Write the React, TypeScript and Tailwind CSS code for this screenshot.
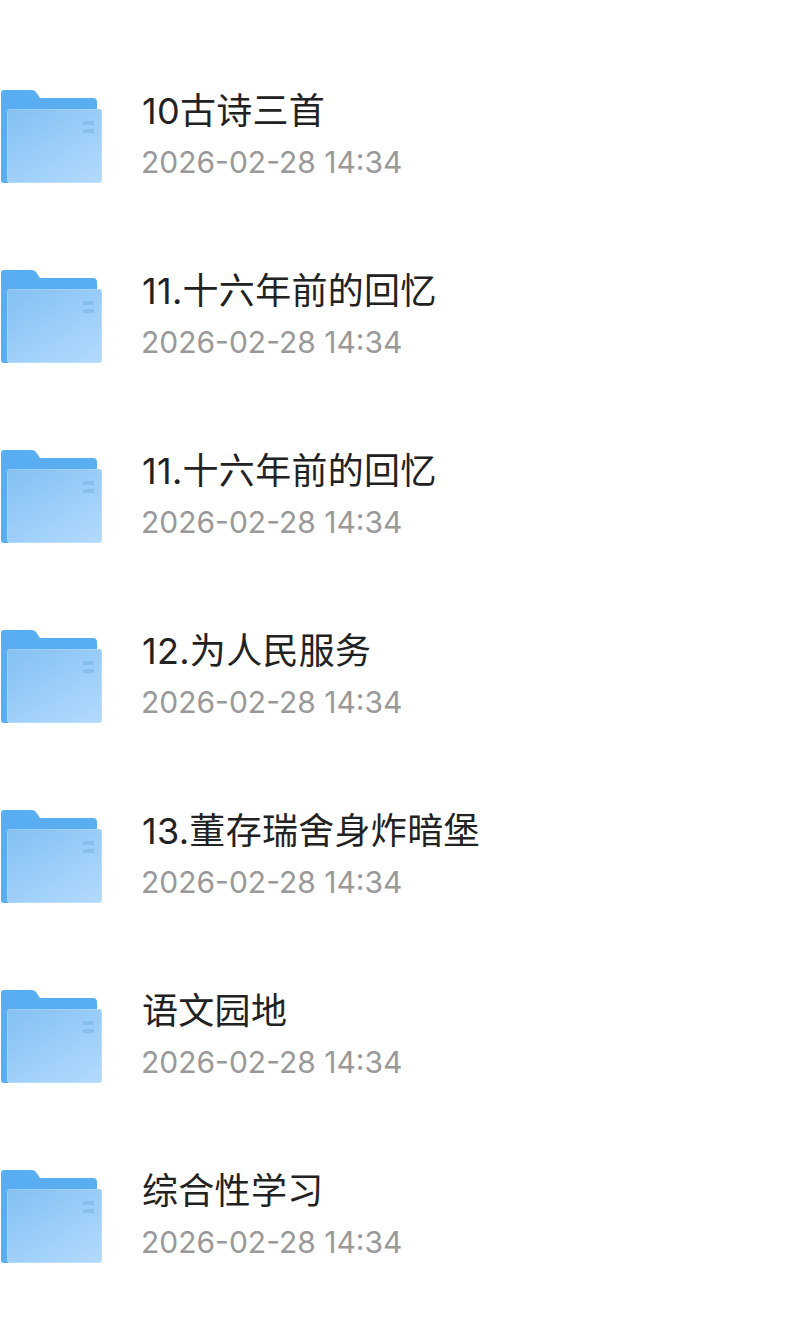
import React from 'react';

const files = [
  '10古诗三首',
  '11.十六年前的回忆',
  '11.十六年前的回忆',
  '12.为人民服务',
  '13.董存瑞舍身炸暗堡',
  '语文园地',
  '综合性学习',
];

const FolderIcon = ({ id }: { id: number }) => (
  <svg width="102" height="94" viewBox="0 0 102 94" className="shrink-0">
    <defs>
      <linearGradient id={`front-${id}`} x1="0.1" y1="0" x2="0.85" y2="1">
        <stop offset="0" stopColor="#86c1f3" />
        <stop offset="1" stopColor="#b0d9fd" />
      </linearGradient>
    </defs>
    <path
      d="M3 0H30C33 0 34.500 1 36 3.500L39 8H92C95 8 96 9.500 96 12.500V93H3C1 93 0 92 0 90V3C0 1 1 0 3 0Z"
      fill="#59aef2"
    />
    <rect x="6" y="19" width="95" height="74" rx="3" fill={`url(#front-${id})`} />
    <rect x="6.500" y="19.500" width="94" height="73" rx="2.500" fill="none" stroke="#ffffff" strokeOpacity="0.2" />
    <rect x="82" y="31" width="11" height="4" rx="1" fill="#6fb0e6" opacity="0.5" />
    <rect x="82" y="39" width="11" height="4" rx="1" fill="#6fb0e6" opacity="0.5" />
  </svg>
);

export default function App() {
  return (
    <div className="min-h-[1339px] bg-white pt-[47px] font-['Inter','Noto_Sans_CJK_SC',sans-serif]">
      {files.map((name, i) => (
        <div key={i} className="flex h-[180px] items-center gap-[39px] pl-px">
          <FolderIcon id={i} />
          <div className="flex flex-col gap-[5px] pb-[2px]">
            <div className="text-[36px] leading-[46px] tracking-[0.3px] text-[#222222]">{name}</div>
            <div className="-ml-px text-[30px] leading-[46px] text-[#999999]">2026-02-28 14:34</div>
          </div>
        </div>
      ))}
    </div>
  );
}
